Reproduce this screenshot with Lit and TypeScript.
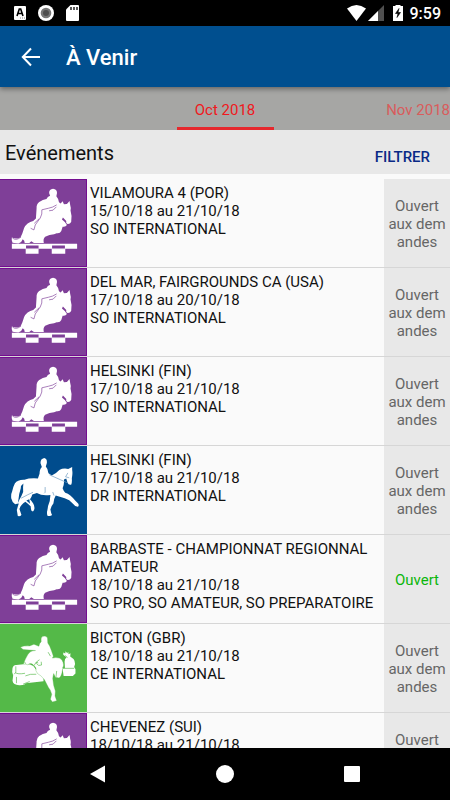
import { LitElement, html, css, svg } from "lit";
import { customElement, property } from "lit/decorators.js";

type Discipline = "jumping" | "dressage" | "cross";

interface HorseEvent {
  name: string;
  dates: string;
  kind: string;
  discipline: Discipline;
  open?: boolean;
}

const EVENTS: HorseEvent[] = [
  { name: "VILAMOURA 4 (POR)", dates: "15/10/18 au 21/10/18", kind: "SO INTERNATIONAL", discipline: "jumping" },
  { name: "DEL MAR, FAIRGROUNDS CA (USA)", dates: "17/10/18 au 20/10/18", kind: "SO INTERNATIONAL", discipline: "jumping" },
  { name: "HELSINKI (FIN)", dates: "17/10/18 au 21/10/18", kind: "SO INTERNATIONAL", discipline: "jumping" },
  { name: "HELSINKI (FIN)", dates: "17/10/18 au 21/10/18", kind: "DR INTERNATIONAL", discipline: "dressage" },
  { name: "BARBASTE - CHAMPIONNAT REGIONNAL AMATEUR", dates: "18/10/18 au 21/10/18", kind: "SO PRO, SO AMATEUR, SO PREPARATOIRE", discipline: "jumping", open: true },
  { name: "BICTON (GBR)", dates: "18/10/18 au 21/10/18", kind: "CE INTERNATIONAL", discipline: "cross" },
  { name: "CHEVENEZ (SUI)", dates: "18/10/18 au 21/10/18", kind: "SO INTERNATIONAL", discipline: "jumping" },
];

const ART = {
  jumping: svg`
    <path fill="#fff" d="M149 50 Q149 38 161 37 Q173 38 173 50 L171 60 Q178 68 179 78 L184 82 L190 75 L194 84 L203 83 L211 74 L213 86 Q216 94 214 103 Q219 118 216 138 Q212 145 205 144 Q199 142 201 135 L191 124 L188 130 Q197 136 203 147 Q199 154 190 152 L186 165 Q182 174 172 172 L164 175 Q150 176 137 183 Q130 189 133 202 L103 202 L95 196 L89 202 L75 202 Q75 193 69 190 Q66 200 56 203 L38 201 Q34 194 36 185 Q48 190 55 187 L62 185 Q68 174 70 166 Q74 146 92 138 Q104 134 109 127 L111 96 Q110 84 119 77 Q130 70 141 68 Q144 60 152 58 Z"/>
    <path fill="none" stroke="#7f3f98" stroke-width="2" d="M172 86 Q160 94 148 96 L127 101 Q129 114 122 126 L107 147 L103 162 L93 157 M119 128 L104 142 M149 104 Q162 106 171 92 M38 187 Q50 196 64 183"/>
    <path fill="#fff" d="M36 204 H234 V219 H198 V234 H157 V219 H117 V234 H78 V219 H36 Z"/>
    <path fill="#7f3f98" d="M79 209 H117 V219 H79 Z M158 209 H197 V219 H158 Z"/>
    <path fill="none" stroke="#dac6e2" stroke-width="2" d="M78 219 H117 M157 219 H198"/>`,
  dressage: svg`
    <path fill="#fff" d="M123 60 Q122 47 134 44 Q144 46 142 60 L139 70 Q145 76 147 90 L157 97 Q170 91 180 80 Q192 74 207 77 L219 71 L219 80 Q221 92 218 105 Q219 120 216 125 Q208 127 205 119 L201 106 L194 109 Q196 120 190 136 Q193 145 198 149 Q214 154 228 173 L237 182 Q241 188 236 192 Q227 191 223 184 L210 172 Q196 164 184 162 L169 158 Q164 166 162 182 Q155 190 153 200 Q155 212 158 217 Q153 222 144 219 Q141 210 144 202 Q145 188 151 174 L153 156 Q128 160 112 150 L98 155 Q96 163 91 169 Q104 183 104 192 Q106 202 100 206 Q94 206 94 199 L93 190 Q84 182 77 177 Q63 185 59 199 L65 216 Q64 222 54 220 L51 202 Q54 190 57 182 Q52 182 46 184 Q36 177 34 166 Q33 153 37 145 Q40 130 45 121 Q54 109 74 110 Q90 104 115 106 L120 92 Q120 77 127 71 Z"/>
    <path fill="#004c8d" d="M71 121 Q63 126 63 136 Q58 151 56 170 L54 181 Q59 169 65 159 Q73 146 70 133 Z M80 173 L89 169 L91 183 Z"/>
    <path fill="none" stroke="#6795bd" stroke-width="2" d="M64 166 Q86 154 100 148 M150 95 L204 119 M137 132 V148 L134 151 M164 158 L160 147 M206 89 L199 101 L210 104"/>`,
  cross: svg`
    <path fill="#fff" d="M50 132 L78 129 Q93 129 101 135 L113 151 L132 165 V181 L78 187 Q76 193 61 193 Q40 194 38 180 L40 164 Q35 153 38 141 Q41 131 50 132 Z M190 143 L197 141 L196 121 Q196 112 202 109 L192 101 L192 94 L198 97 L199 90 L204 96 L207 92 L208 99 L214 96 L213 106 Q223 112 226 119 Q230 128 225 138 L229 145 L229 158 L221 165 H193 Z"/>
    <path fill="#fff" stroke="#54b948" stroke-width="1" d="M125 61 Q123 48 130 45 Q139 42 144 49 L145 65 Q152 74 156 88 L162 105 L159 111 Q169 108 180 111 Q191 115 193 132 L190 145 Q187 168 179 171 L168 169 L163 158 Q161 165 160 173 L163 194 L168 211 L167 226 L172 240 L159 244 L153 236 L157 221 Q154 207 147 200 L135 177 Q125 163 114 158 L109 149 Q112 140 103 134 Q96 123 84 131 L71 128 Q78 111 84 101 Q91 88 108 88 L70 85 L62 78 Q72 73 90 74 L103 69 L118 75 Q119 66 125 61 Z"/>
    <path fill="none" stroke="#54b948" stroke-width="2" d="M48 136 V154 L43 160 M76 157 Q54 161 46 155 M77 165 Q91 158 110 160 M50 168 V187 M70 190 L90 182 M120 116 Q112 119 110 127 Q117 137 126 132 L125 122 M146 93 L153 105 M103 134 L110 123 L116 126 M190 139 L193 142 H225 M172 150 L170 168 M78 128 L74 122 M197 103 L205 109"/>`,
};

@customElement("discipline-icon")
export class DisciplineIcon extends LitElement {
  @property() discipline: Discipline = "jumping";

  static styles = css`
    :host { display: block; }
    .tile { display: block; width: 100%; height: 100%; box-sizing: border-box; }
    .jumping { background: #7f3f98; box-shadow: inset -1px 1px #740d90, inset 0 -1px #740d90; }
    .dressage { background: #004c8d; }
    .cross { background: #54b948; }
  `;

  render() {
    return html`<svg class="tile ${this.discipline}" viewBox="0 9 264 264" aria-hidden="true">${ART[this.discipline]}</svg>`;
  }
}

@customElement("event-row")
export class EventRow extends LitElement {
  @property({ attribute: false }) event!: HorseEvent;

  static styles = css`
    :host { display: block; }
    .row {
      display: flex;
      min-height: 88px;
      border-bottom: 1px solid #d6d6d6;
    }
    .icon { width: 87px; height: 88px; flex: none; }
    .info { flex: 1; min-width: 0; padding: 5px 0 0 3px; color: #111; line-height: 18px; }
    .info p { margin: 0; }
    .status {
      width: 66px;
      flex: none;
      box-sizing: border-box;
      padding-top: 1px;
      display: flex;
      align-items: center;
      justify-content: center;
      background: #e8e8e8;
      color: #666;
      line-height: 18px;
      text-align: center;
    }
    .open { color: #0bb60b; }
  `;

  render() {
    const e = this.event;
    return html`
      <article class="row">
        <discipline-icon class="icon" .discipline=${e.discipline}></discipline-icon>
        <div class="info">
          <p>${e.name}</p>
          <p>${e.dates}</p>
          <p>${e.kind}</p>
        </div>
        <div class="status ${e.open ? "open" : ""}">
          <span>${e.open ? "Ouvert" : html`Ouvert aux dem<wbr>andes`}</span>
        </div>
      </article>`;
  }
}

@customElement("app-root")
export class AppRoot extends LitElement {
  static styles = css`
    :host {
      display: flex;
      flex-direction: column;
      height: 100vh;
      overflow: hidden;
      background: #fafafa;
      font-family: Roboto, sans-serif;
      font-size: 15px;
    }
    button { border: 0; padding: 0; margin: 0; background: none; font: inherit; color: inherit; cursor: pointer; }
    svg { display: block; }
    .system {
      flex: none;
      height: 26px;
      display: flex;
      align-items: center;
      justify-content: space-between;
      padding: 0 9px 0 14px;
      background: #000;
      color: #fff;
      font-size: 16px;
      font-weight: 500;
    }
    .status-icons { display: flex; align-items: center; gap: 7px; line-height: 26px; }
    .clock { padding-top: 2px; }
    .bar {
      flex: none;
      height: 61px;
      display: flex;
      align-items: center;
      gap: 25px;
      padding-left: 21px;
      background: #004f8f;
      color: #fff;
      box-shadow: 0 2px 5px rgba(0, 0, 0, 0.4);
      z-index: 1;
    }
    h1 { margin: 0; padding-top: 2px; font-size: 22px; font-weight: 500; line-height: 26px; }
    .tabs {
      flex: none;
      height: 43px;
      display: grid;
      grid-template-columns: 1fr 97px 1fr;
      background: #a6a6a4;
    }
    .tab { color: #d95c5c; white-space: nowrap; line-height: 18px; padding-top: 3px; }
    .current {
      grid-column: 2;
      color: #f01820;
      border-bottom: 3px solid #e6282d;
      padding-top: 6px;
    }
    .next { justify-self: end; }
    .heading {
      flex: none;
      height: 44px;
      box-sizing: border-box;
      display: flex;
      align-items: center;
      justify-content: space-between;
      padding: 0 20px 0 5px;
      background: #e8e8e8;
    }
    h2 { margin: 0; font-size: 20px; font-weight: 400; line-height: 24px; padding-top: 2px; color: #111; }
    .filter { font-weight: 500; line-height: 18px; color: #0a2a86; padding-top: 10px; }
    .list { flex: 1; min-height: 0; overflow-y: auto; scrollbar-width: none; margin: 0; padding: 5px 0 0; list-style: none; }
    .nav {
      flex: none;
      height: 52px;
      display: grid;
      grid-template-columns: repeat(3, 1fr);
      padding: 0 34px;
      place-items: center;
      background: #000;
    }
  `;

  render() {
    return html`
      <div class="system">
        <svg width="66" height="18" viewBox="0 0 66 18" aria-hidden="true">
          <rect y="2" width="12" height="14" rx="1" fill="#fff" />
          <path d="M3 12 L5.3 5 H6.7 L9 12 M4.2 9.5 H7.8" fill="none" stroke="#000" stroke-width="1.6" />
          <path d="M6 14h1m1 0h1m1 0h1" stroke="#888" />
          <circle cx="32" cy="9" r="8" fill="#fff" />
          <circle cx="32" cy="9" r="5.3" fill="#777" />
          <circle cx="32" cy="9" r="3" fill="#4e4e4e" />
          <path d="M56.5 1 H64 Q65 1 65 2 V16 Q65 17 64 17 H53 Q52 17 52 16 V5.500 Z" fill="#fff" />
          <path d="M57 3v3m3-3v3m3-3v3" stroke="#111" stroke-width="1.4" />
        </svg>
        <div class="status-icons">
          <svg width="56" height="18" viewBox="0 0 56 18" aria-hidden="true">
            <path d="M0 4.5 Q9.5 -2.5 19 4.5 L9.5 17 Z" fill="#fff" />
            <path d="M37 1 V17 H21 Z" fill="#505050" />
            <path d="M31 7 V17 H21 Z" fill="#fff" />
            <path d="M46 2 H48.5 V1 H53.5 V2 H56 V17 H46 Z" fill="#fff" />
            <path d="M52 4.5 L48.5 9.5 H51 L50 13.500 L53.500 8.500 H51 Z" fill="#000" stroke="#000" stroke-width="0.6" />
          </svg>
          <span class="clock">9:59</span>
        </div>
      </div>

      <header class="bar">
        <button aria-label="Retour">
          <svg width="20" height="20" viewBox="0 0 20 20" fill="none" stroke="#fff" stroke-width="2">
            <path d="M19 10 H2 M10 1.500 L1.800 10 L10 18.500" />
          </svg>
        </button>
        <h1>À Venir</h1>
      </header>

      <nav class="tabs" aria-label="Mois">
        <button class="tab current" aria-current="true">Oct 2018</button>
        <button class="tab next">Nov 2018</button>
      </nav>

      <div class="heading">
        <h2>Evénements</h2>
        <button class="filter">FILTRER</button>
      </div>

      <ul class="list">
        ${EVENTS.map((e) => html`<li><event-row .event=${e}></event-row></li>`)}
      </ul>

      <nav class="nav" aria-label="Navigation">
        <button aria-label="Précédent">
          <svg width="18" height="18" viewBox="0 0 18 18"><path d="M1 9 L16 0.500 V17.500 Z" fill="#fff" /></svg>
        </button>
        <button aria-label="Accueil">
          <svg width="18" height="18" viewBox="0 0 18 18"><circle cx="9" cy="9" r="9" fill="#fff" /></svg>
        </button>
        <button aria-label="Applications">
          <svg width="18" height="18" viewBox="0 0 18 18"><rect x="1" y="1" width="16" height="16" rx="1" fill="#fff" /></svg>
        </button>
      </nav>
    `;
  }
}
